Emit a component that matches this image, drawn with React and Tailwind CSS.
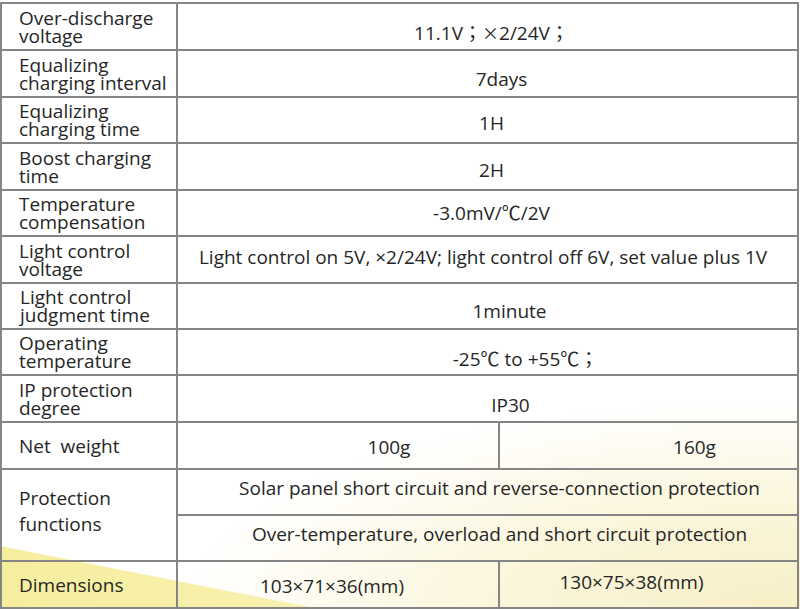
const FONT = "font-['Open_Sans',_'Noto_Sans_CJK_SC',_sans-serif]";
const TC = "font-['Noto_Sans_CJK_TC',_sans-serif]";

function Label({ children, className = "" }) {
  return (
    <div
      className={
        "w-[176px] shrink-0 border-r-2 border-[#858585] flex items-center pl-[17px] text-[19px] leading-[18px] text-[#262626] " +
        className
      }
    >
      <div>{children}</div>
    </div>
  );
}

function Val({ children, className = "" }) {
  return (
    <div
      className={
        "flex-1 flex items-center justify-center text-[19px] leading-[22px] text-[#262626] whitespace-nowrap " +
        className
      }
    >
      <span>{children}</span>
    </div>
  );
}

function Row({ h, children }) {
  return <div className={"flex border-b-2 border-[#858585] " + h}>{children}</div>;
}

export default function App() {
  return (
    <div className={"relative w-[800px] h-[609px] overflow-hidden bg-white " + FONT}>
      <div className="absolute inset-0 bg-[radial-gradient(ellipse_620px_210px_at_800px_609px,#f7efc6_0%,#fbf6dc_50%,rgba(255,255,255,0)_100%)]" />
      <div className="absolute inset-0 [clip-path:polygon(0_546px,320px_609px,0_609px)] bg-[linear-gradient(90deg,#f6ee9e_0%,#f8f1b2_45%,#fbf6d6_100%)]" />
      <div className="relative pt-[2px]">
        <div className="w-[799px] border-t-2 border-l-2 border-r-2 border-[#858585]">
          <Row h="h-[47px]">
            <Label>Over-discharge<br />voltage</Label>
            <Val className="pl-[8px] pt-[12px]">
              11.1V<span className={TC}>；</span><span className={"text-[17px] " + TC}>×</span>2/24V<span className={TC}>；</span>
            </Val>
          </Row>
          <Row h="h-[47px]">
            <Label>Equalizing<br />charging interval</Label>
            <Val className="pl-[28px] pt-[10px]">7days</Val>
          </Row>
          <Row h="h-[46px]">
            <Label>Equalizing<br />charging time</Label>
            <Val className="pl-[8px] pt-[6px]">1H</Val>
          </Row>
          <Row h="h-[47px]">
            <Label>Boost charging<br />time</Label>
            <Val className="pl-[8px] pt-[7px]">2H</Val>
          </Row>
          <Row h="h-[46px]">
            <Label>Temperature<br />compensation</Label>
            <Val className="pl-[8px]">-3.0mV/℃/2V</Val>
          </Row>
          <Row h="h-[47px]">
            <Label>Light control<br />voltage</Label>
            <Val className="pr-[9px] pb-[6px]">
              Light control on 5V, ×2/24V; light control off 6V, set value plus 1V
            </Val>
          </Row>
          <Row h="h-[46px]">
            <Label className="pl-[18px]">Light control<br />judgment time</Label>
            <Val className="pl-[44px] pt-[10px]">1minute</Val>
          </Row>
          <Row h="h-[46px]">
            <Label>Operating<br />temperature</Label>
            <Val className="pl-[76px] pt-[12px]">
              -25℃ to +55℃<span className={TC}>；</span>
            </Val>
          </Row>
          <Row h="h-[47px]">
            <Label>IP protection<br />degree</Label>
            <Val className="pl-[46px] pt-[12px] text-[18px]">IP30</Val>
          </Row>
          <Row h="h-[47px]">
            <Label>Net&nbsp; weight</Label>
            <div className="flex-1 flex">
              <Val className="w-[322px] flex-none border-r-2 border-[#858585] pl-[102px] pt-[3px]">100g</Val>
              <Val className="pl-[92px] pt-[3px]">160g</Val>
            </div>
          </Row>
          <Row h="h-[92px]">
            <Label className="leading-[26px] pb-[8px]">Protection<br />functions</Label>
            <div className="flex-1 flex flex-col">
              <Val className="border-b-2 border-[#858585] pl-[24px] pb-[8px]">
                Solar panel short circuit and reverse-connection protection
              </Val>
              <Val className="pl-[24px] pb-[8px]">
                Over-temperature, overload and short circuit protection
              </Val>
            </div>
          </Row>
          <Row h="h-[47px]">
            <Label>Dimensions</Label>
            <div className="flex-1 flex">
              <Val className="w-[322px] flex-none border-r-2 border-[#858585] pr-[12px] pt-[3px]">103×71×36(mm)</Val>
              <Val className="pr-[34px] pb-[6px]">130×75×38(mm)</Val>
            </div>
          </Row>
        </div>
      </div>
    </div>
  );
}
